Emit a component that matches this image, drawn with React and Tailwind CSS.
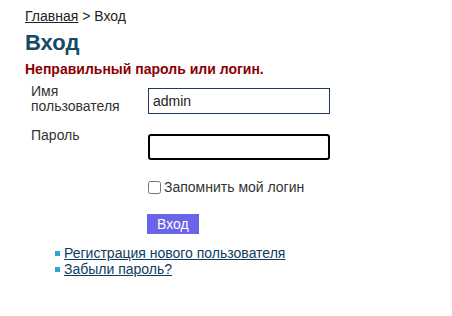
import React from 'react';

const App = () => {
  return (
    <div className="min-h-screen bg-white px-[25px] pt-[8px] text-[14px] text-[#222] font-['Liberation_Sans',Arial,sans-serif]">
      <div className="leading-[17px]">
        <a href="#" className="underline text-[#222]">Главная</a> &gt; Вход
      </div>
      <h1 className="mt-[5px] text-[22px] font-bold leading-[26px] text-[#174a66]">Вход</h1>
      <p className="mt-[5px] font-bold text-[#8b0000] leading-[17px]">Неправильный пароль или логин.</p>

      <form className="mt-[10px]" onSubmit={(e) => e.preventDefault()}>
        <div className="grid grid-cols-[117px_182px] gap-y-[20px] pl-[6px]">
          <label htmlFor="user" className="-mt-[4px] leading-[15px] text-[#333]">Имя<br />пользователя</label>
          <input
            id="user"
            defaultValue="admin"
            className="h-[26px] w-[182px] border border-[#1d3a5c] px-[4px] text-[14px] outline-none"
          />
          <label htmlFor="pass" className="-mt-[7px] leading-[16px] text-[#333]">Пароль</label>
          <input
            id="pass"
            type="password"
            autoFocus
            className="h-[26px] w-[182px] rounded-[3px] border-2 border-black px-[3px] outline-none"
          />
        </div>

        <div className="mt-[17px] ml-[123px] flex items-center gap-[3px]">
          <input type="checkbox" id="remember" className="m-0 h-[13px] w-[13px]" />
          <label htmlFor="remember" className="text-[#333]">Запомнить мой логин</label>
        </div>

        <button className="mt-[16px] ml-[122px] h-[20px] bg-[#6b63e8] px-[10px] text-white leading-[20px]">
          Вход
        </button>
      </form>

      <ul className="mt-[10px] ml-[30px] leading-[16px]">
        <li className="flex items-center gap-[4px]">
          <span className="inline-block h-[5px] w-[5px] bg-[#29a8d8]" />
          <a href="#" className="underline text-[#0f3c5f]">Регистрация нового пользователя</a>
        </li>
        <li className="flex items-center gap-[4px]">
          <span className="inline-block h-[5px] w-[5px] bg-[#29a8d8]" />
          <a href="#" className="underline text-[#0f3c5f]">Забыли пароль?</a>
        </li>
      </ul>
    </div>
  );
};

export default App;
